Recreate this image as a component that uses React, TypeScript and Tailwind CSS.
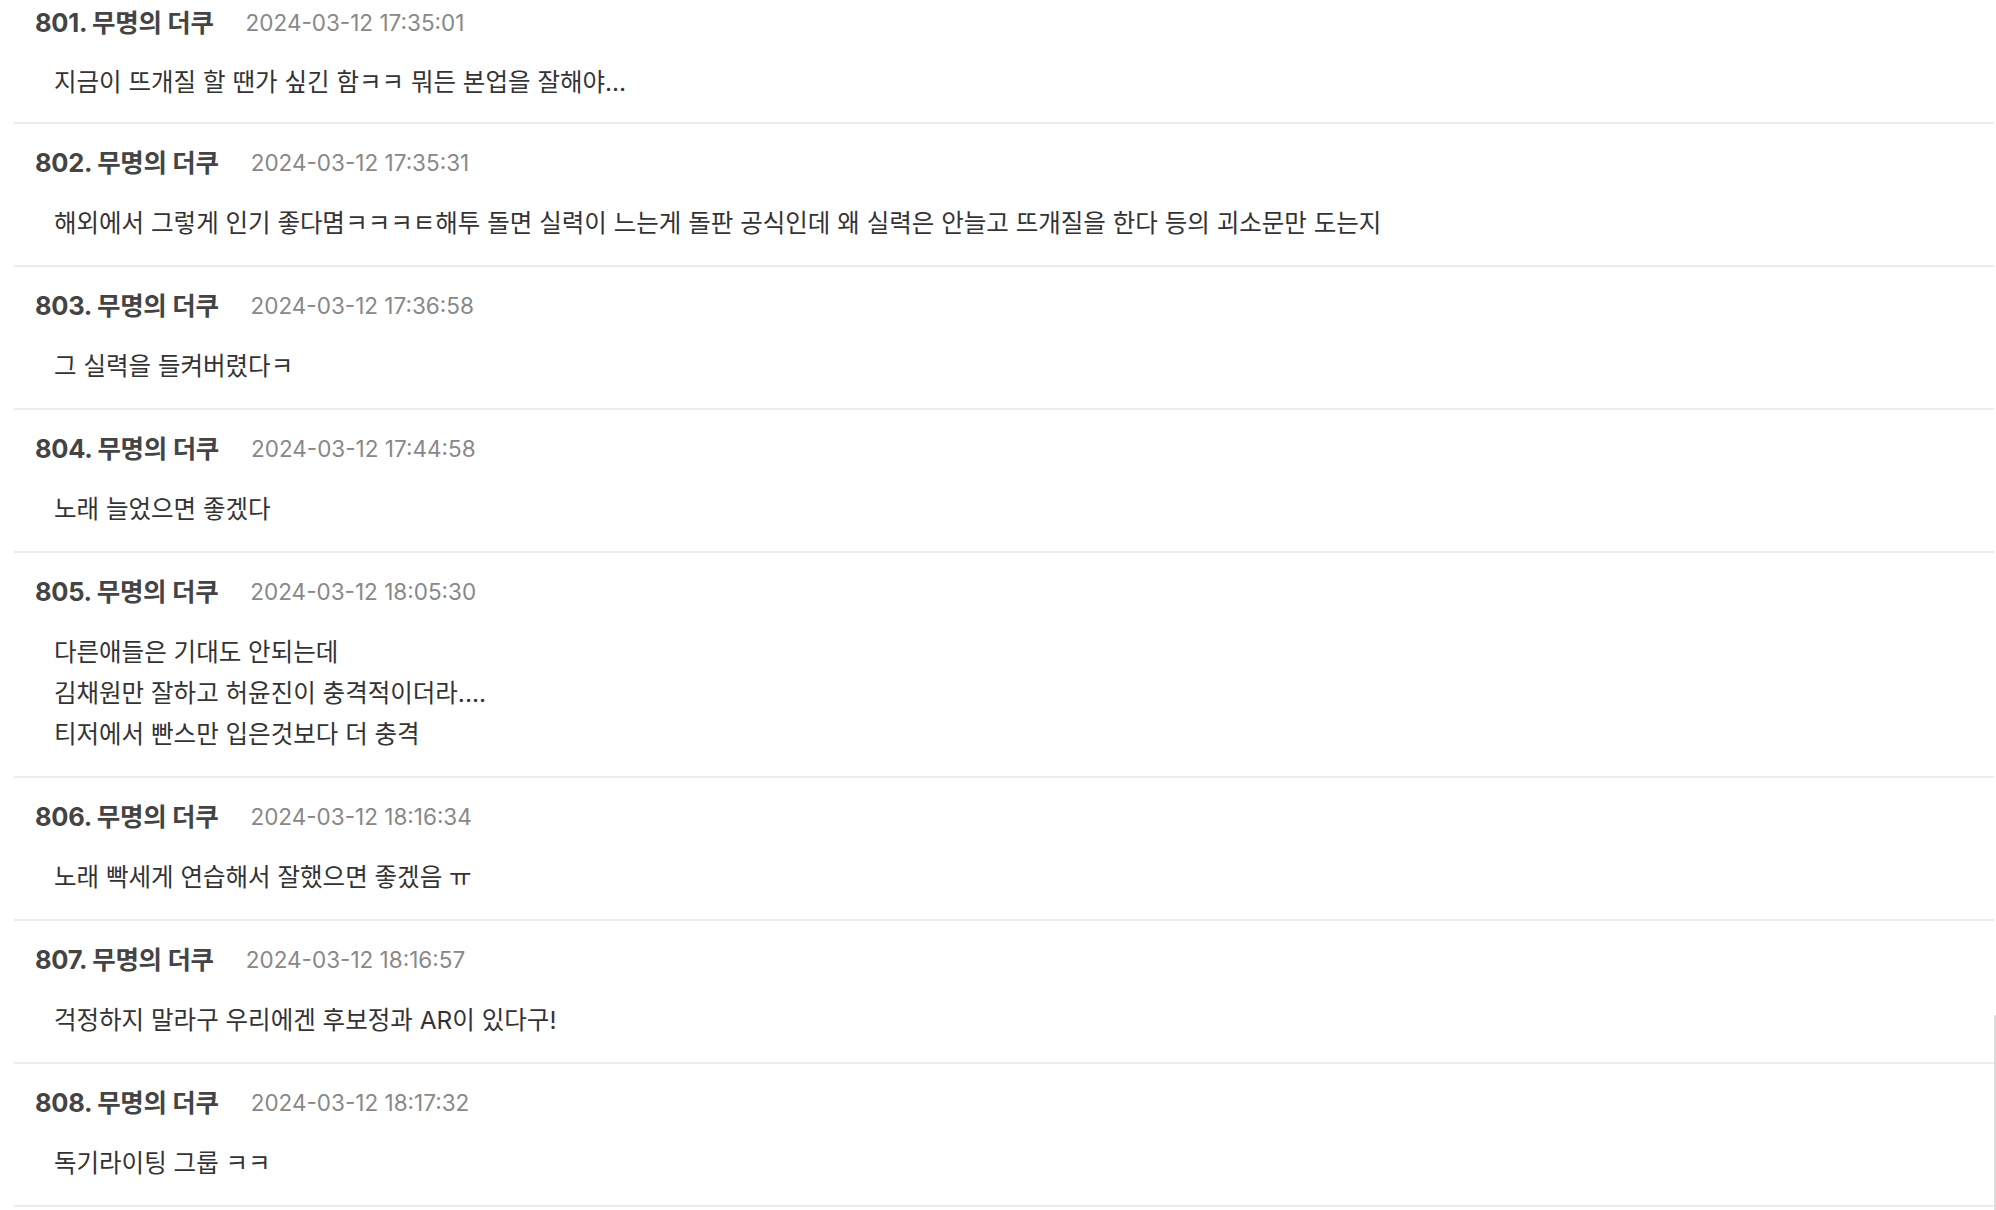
import React from "react";

type Post = { no: number; date: string; lines: string[] };

const posts: Post[] = [
  { no: 801, date: "2024-03-12 17:35:01", lines: ["지금이 뜨개질 할 땐가 싶긴 함ㅋㅋ 뭐든 본업을 잘해야..."] },
  {
    no: 802,
    date: "2024-03-12 17:35:31",
    lines: ["해외에서 그렇게 인기 좋다몀ㅋㅋㅋㅌ해투 돌면 실력이 느는게 돌판 공식인데 왜 실력은 안늘고 뜨개질을 한다 등의 괴소문만 도는지"],
  },
  { no: 803, date: "2024-03-12 17:36:58", lines: ["그 실력을 들켜버렸다ㅋ"] },
  { no: 804, date: "2024-03-12 17:44:58", lines: ["노래 늘었으면 좋겠다"] },
  {
    no: 805,
    date: "2024-03-12 18:05:30",
    lines: ["다른애들은 기대도 안되는데", "김채원만 잘하고 허윤진이 충격적이더라....", "티저에서 빤스만 입은것보다 더 충격"],
  },
  { no: 806, date: "2024-03-12 18:16:34", lines: ["노래 빡세게 연습해서 잘했으면 좋겠음 ㅠ"] },
  { no: 807, date: "2024-03-12 18:16:57", lines: ["걱정하지 말라구 우리에겐 후보정과 AR이 있다구!"] },
  { no: 808, date: "2024-03-12 18:17:32", lines: ["독기라이팅 그룹 ㅋㅋ"] },
];

export default function App() {
  return (
    <div
      className="relative w-[1996px] h-[1210px] overflow-hidden bg-white"
      style={{ fontFamily: '"Inter", "Noto Sans CJK KR", sans-serif' }}
    >
      <div className="ml-[14px] mr-[2px] flex flex-col">
        {posts.map((p, i) => (
          <div
            key={p.no}
            className={`border-b-2 border-[#ececec] ${i === 0 ? "pt-[7px] pb-[19px]" : "pt-[23px] pb-[21px]"}`}
          >
            <div className="flex items-center h-[32px] pl-[21px]">
              <span className="text-[25.5px] font-bold text-[#444444] tracking-[-0.3px]">
                {p.no}. 무명의 더쿠
              </span>
              <span className="ml-[32px] text-[22.5px] text-[#888888]">{p.date}</span>
            </div>
            <div className={`${i === 0 ? "mt-[23px]" : "mt-[24px]"} pl-[40px] text-[24.5px] leading-[41px] text-[#333333]`}>
              {p.lines.map((l, j) => (
                <div key={j}>{l}</div>
              ))}
            </div>
          </div>
        ))}
      </div>
      <div className="absolute right-0 top-[1015px] w-[2px] h-[195px] bg-[#dcdcdc]" />
    </div>
  );
}
